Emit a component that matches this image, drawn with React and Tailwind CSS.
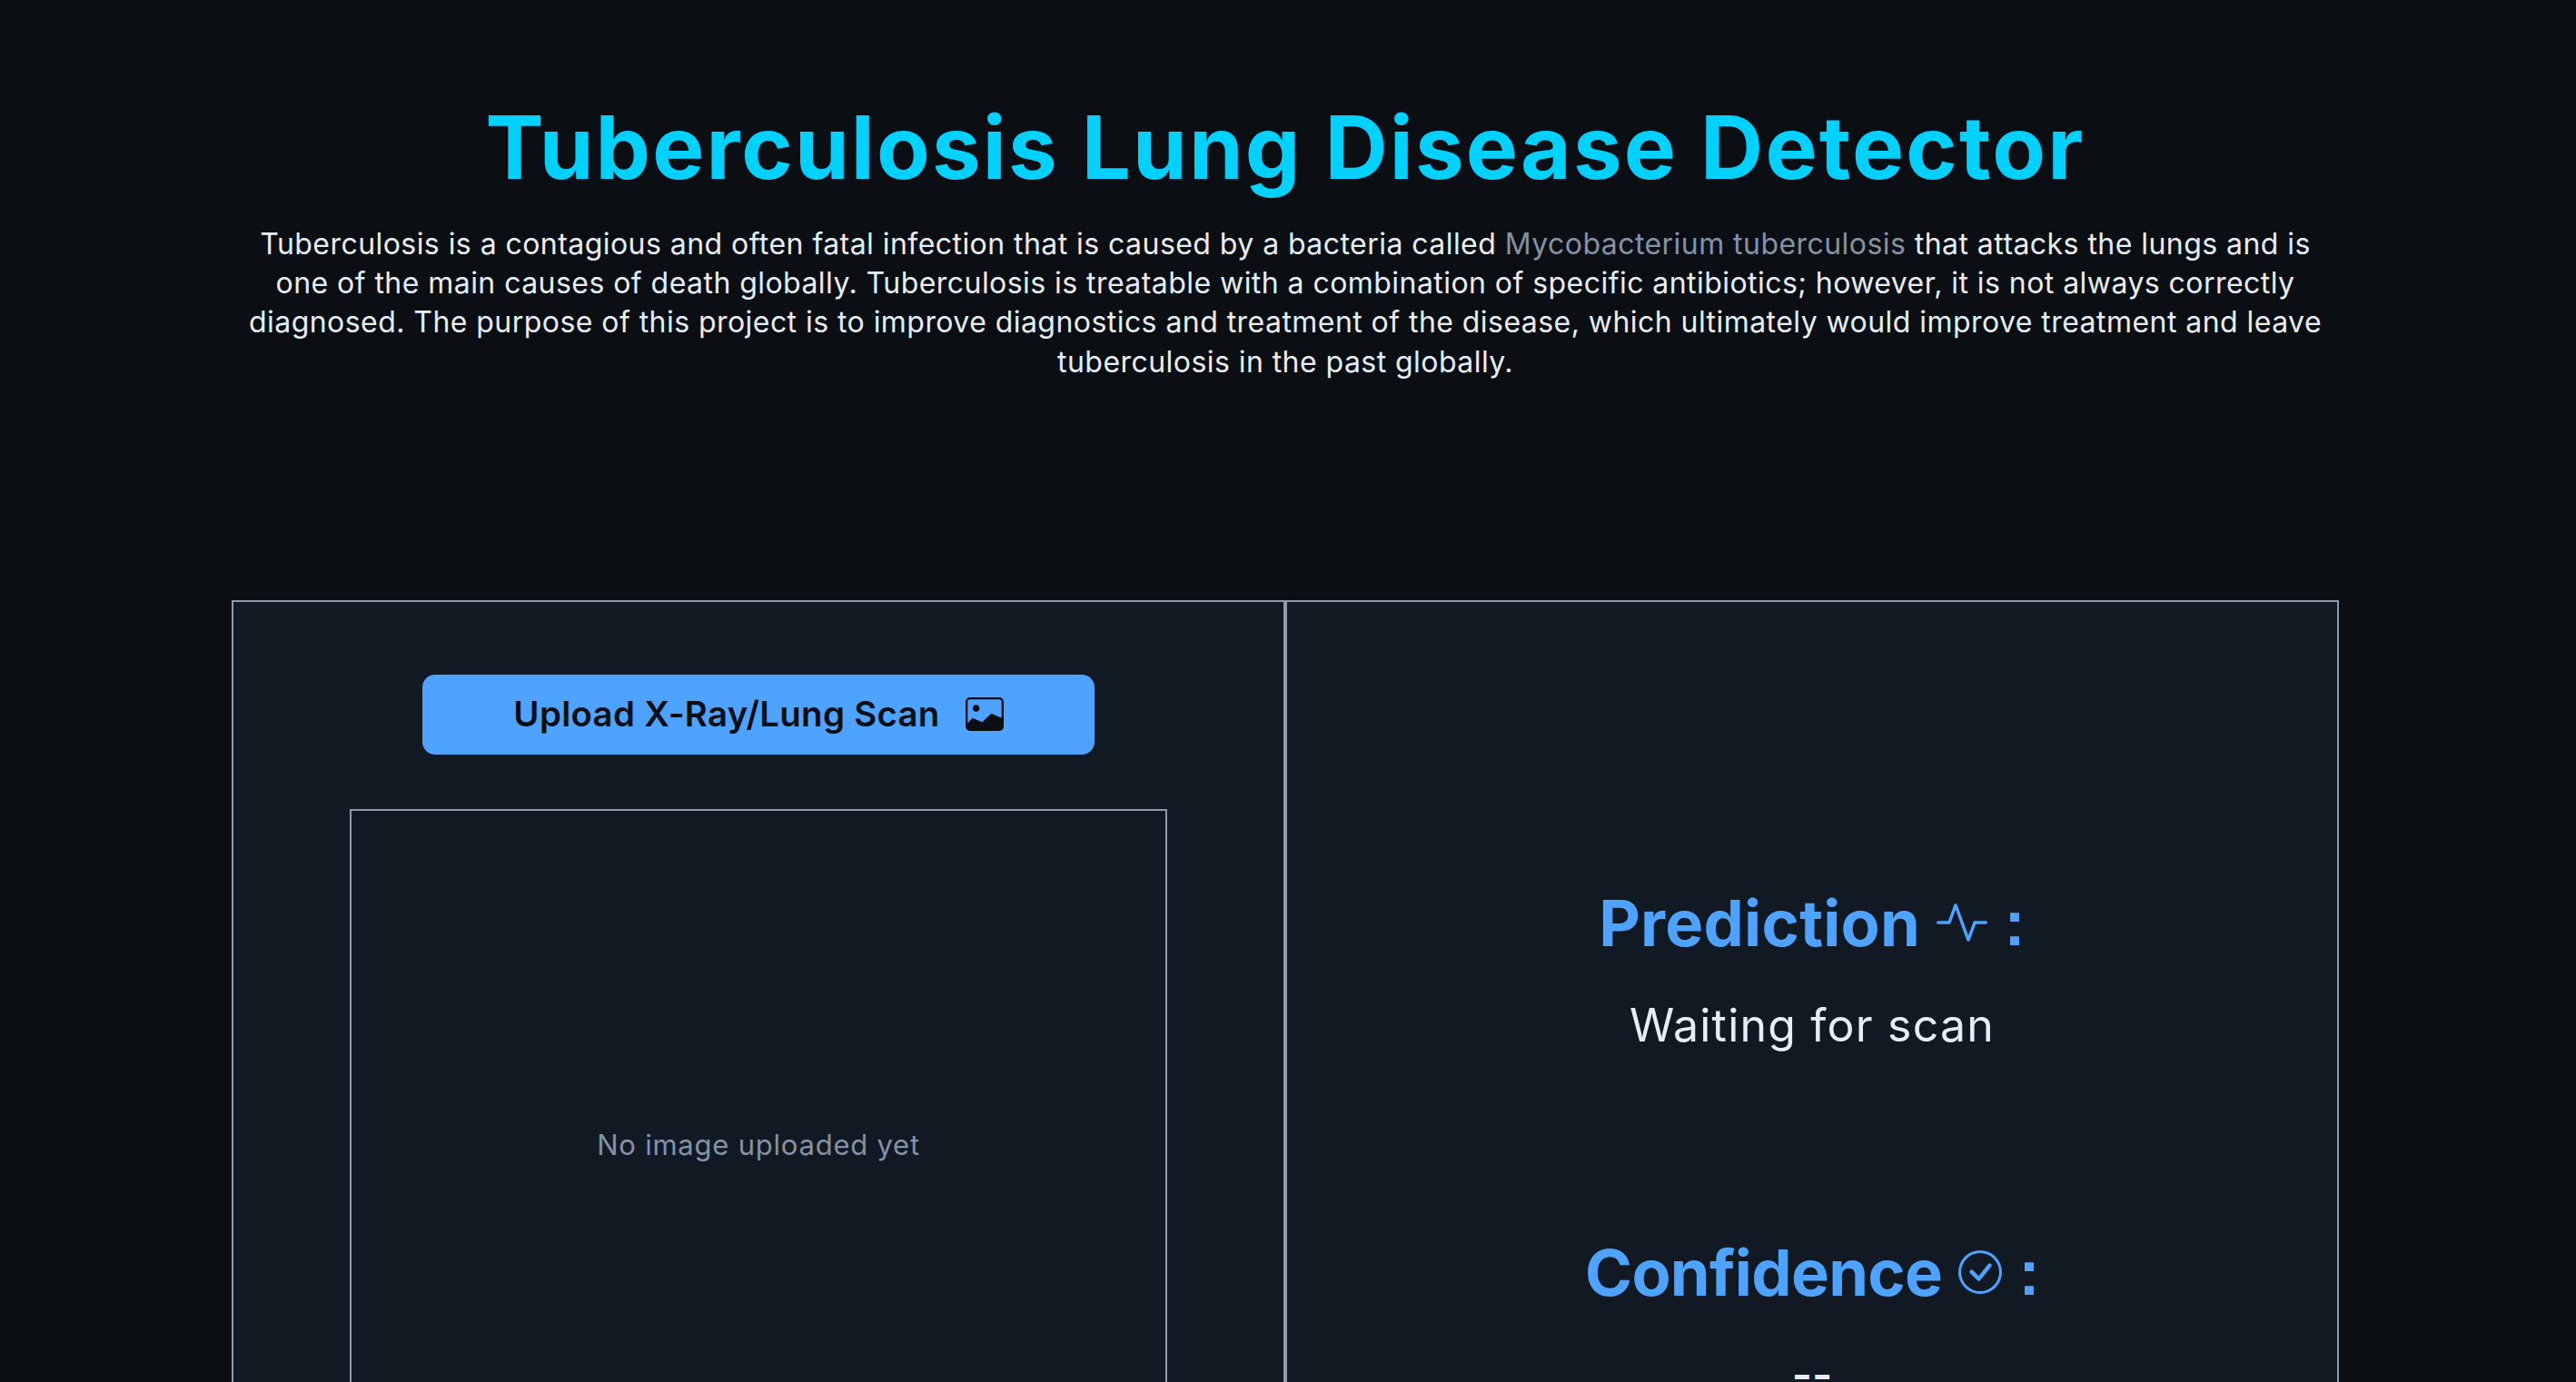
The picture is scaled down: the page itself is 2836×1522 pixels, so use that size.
import React from 'react';
import { BsActivity, BsCheckCircle } from 'react-icons/bs';

const ImageIcon = () => (
  <svg viewBox="0 0 126 111" className="w-[42px] h-[37px]">
    <rect x="3.5" y="3.5" width="119" height="104" rx="11" fill="none" stroke="#0b0f14" strokeWidth="7" />
    <circle cx="35" cy="36" r="11" fill="#0b0f14" />
    <path d="M6 86 L23 68 L55 82 L85 53 L120 68 V98 Q120 108 110 108 H16 Q6 108 6 98 Z" fill="#0b0f14" />
  </svg>
);

export default function App() {
  return (
    <div className="h-screen overflow-hidden bg-[#0b0f14] text-[#e6edf3] font-['Inter',sans-serif]">
      <div className="w-[2830px]">
        {/* Header */}
        <header className="pt-[105px] w-[2320px] mx-auto text-center">
          <h1 className="text-[96px] leading-[115px] font-bold tracking-[0.022em] text-[#00d1ff]">Tuberculosis Lung Disease Detector</h1>
          <p className="mt-[27px] text-[32px] leading-[43.2px] tracking-[0.014em]">
            Tuberculosis is a contagious and often fatal infection that is caused by a bacteria called{' '}
            <span className="text-[#8492a6]">Mycobacterium tuberculosis</span> that attacks the lungs and is one of the
            main causes of death globally. Tuberculosis is treatable with a combination of specific antibiotics; however,
            it is not always correctly diagnosed. The purpose of this project is to improve diagnostics and treatment of
            the disease, which ultimately would improve treatment and leave tuberculosis in the past globally.
          </p>
        </header>

        {/* Panels */}
        <main className="mt-[241px] w-[2320px] mx-auto flex">
          <section className="w-1/2 h-[1000px] bg-[#111923] border-2 border-[#8a9bae] flex flex-col items-center pt-[80px]">
            <button className="w-[740px] h-[88px] rounded-[14px] bg-[#4da3ff] text-[#0b0f14] text-[38.4px] font-semibold tracking-[0.008em] flex items-center justify-center gap-[28px]">
              Upload X-Ray/Lung Scan
              <ImageIcon />
            </button>
            <div className="mt-[60px] w-[900px] h-[740px] border-2 border-[#8a9bae] flex items-center justify-center text-[#8492a6] text-[31px] tracking-[0.025em]">
              No image uploaded yet
            </div>
          </section>
          <section className="w-1/2 h-[1000px] bg-[#111923] border-2 border-[#8a9bae] flex flex-col items-center pt-[311px]">
            <h2 className="flex items-center text-[70.4px] leading-[85px] font-bold tracking-[0.004em] text-[#4da3ff]">
              Prediction
              <BsActivity size={56} className="ml-[18px] mr-[18px]" />
              <span className="font-['Liberation_Sans',sans-serif]">:</span>
            </h2>
            <p className="mt-[34px] text-[50px] leading-[72px] tracking-[0.024em]">Waiting for scan</p>
            <h2 className="mt-[194px] flex items-center text-[70.4px] leading-[85px] font-bold tracking-[-0.01em] text-[#4da3ff]">
              Confidence
              <BsCheckCircle size={48} className="ml-[18px] mr-[18px]" />
              <span className="font-['Liberation_Sans',sans-serif]">:</span>
            </h2>
            <p className="mt-[34px] text-[48px] leading-[72px] font-semibold">--</p>
          </section>
        </main>
      </div>
    </div>
  );
}
